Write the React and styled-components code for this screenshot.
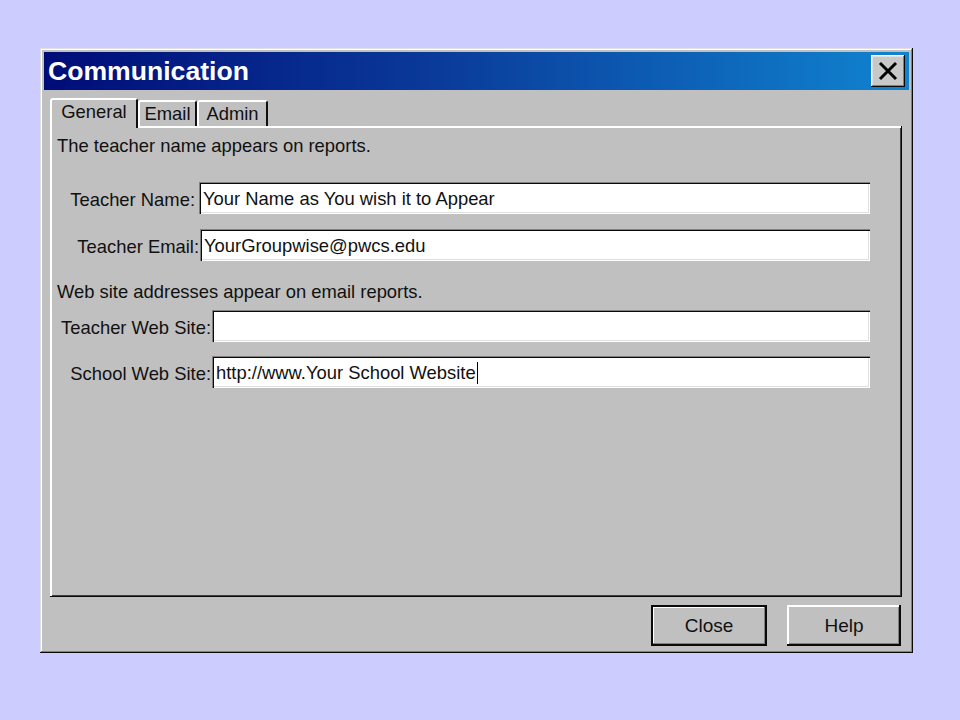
import styled, { createGlobalStyle } from 'styled-components'

const GlobalStyle = createGlobalStyle`
    html, body {
        margin: 0;
        padding: 0;
        background-color: #ccccff;
        font-family: "Liberation Sans", Arial, sans-serif;
    }
`

const Page = styled.div`
    width: 960px;
    height: 720px;
    padding: 48px 0 0 40px;
    box-sizing: border-box;
`

const Window = styled.div`
    width: 873px;
    height: 605px;
    box-sizing: border-box;
    padding: 4px;
    background-color: #c0c0c0;
    display: flex;
    flex-direction: column;
    box-shadow: inset -1px -1px #0a0a0a, inset 1px 1px #dfdfdf,
        inset -2px -2px #808080, inset 2px 2px #ffffff;
`

const TitleBar = styled.div`
    height: 38px;
    display: flex;
    align-items: center;
    justify-content: space-between;
    padding: 0 4px 0 4px;
    background: linear-gradient(90deg, #000c78 0%, #0a3a9a 45%, #1084d0 100%);
`

const Title = styled.span`
    color: white;
    font-weight: bold;
    font-size: 26.6px;
`

const XButton = styled.div`
    width: 34px;
    height: 32px;
    box-sizing: border-box;
    background-color: #c8c8c8;
    display: flex;
    align-items: center;
    justify-content: center;
    box-shadow: inset -1px -1px #0a0a0a, inset 1px 1px #ffffff,
        inset -2px -2px #808080, inset 2px 2px #dfdfdf;
`

const TabBar = styled.div`
    display: flex;
    align-items: flex-end;
    margin: 8px 0 0 6px;
    height: 28px;
    position: relative;
    z-index: 1;
`

const Tab = styled.div`
    width: ${p => p.width}px;
    height: ${p => (p.active ? 30 : 26)}px;
    margin-bottom: ${p => (p.active ? -2 : 0)}px;
    box-sizing: border-box;
    background-color: #c0c0c0;
    font-size: 18.4px;
    color: #111;
    display: flex;
    align-items: center;
    justify-content: center;
    padding-bottom: ${p => (p.active ? 4 : 0)}px;
    border-top: 2px solid #ffffff;
    border-left: 2px solid #ffffff;
    border-right: 2px solid #101010;
    border-top-left-radius: 3px;
    border-top-right-radius: 3px;
`

const Panel = styled.div`
    width: 852px;
    height: 471px;
    margin-left: 6px;
    box-sizing: border-box;
    padding: 8px 32px 0 7px;
    background-color: #c0c0c0;
    box-shadow: inset -1px -1px #0a0a0a, inset 2px 2px #ffffff,
        inset -2px -2px #404040;
    font-size: 18.4px;
    color: #111;
`

const Note = styled.div`
    height: 24px;
    line-height: 24px;
    margin-top: ${p => p.top || 0}px;
`

const Row = styled.div`
    display: flex;
    align-items: center;
    height: 32px;
    margin-top: ${p => p.top}px;
`

const Label = styled.div`
    width: ${p => p.width}px;
    text-align: right;
    white-space: nowrap;
    padding-top: 3px;
`

const Field = styled.div`
    flex: 1;
    height: 32px;
    box-sizing: border-box;
    margin-left: ${p => p.gap}px;
    background-color: white;
    display: flex;
    align-items: center;
    padding: 2px 0 0 4px;
    white-space: nowrap;
    box-shadow: inset 1px 1px #808080, inset 2px 2px #0a0a0a,
        inset -1px -1px #ffffff, inset -2px -2px #dfdfdf;
`

const Caret = styled.span`
    display: inline-block;
    width: 1px;
    height: 22px;
    background-color: black;
    margin-left: 1px;
`

const ButtonRow = styled.div`
    display: flex;
    justify-content: flex-end;
    gap: 20px;
    margin-top: 8px;
    padding-right: 8px;
`

const Button = styled.div`
    width: ${p => p.width}px;
    height: 41px;
    box-sizing: border-box;
    display: flex;
    align-items: center;
    justify-content: center;
    font-size: 19px;
    color: #111;
    background-color: #c0c0c0;
    box-shadow: ${p =>
        p.primary
            ? 'inset 0 0 0 2px #0a0a0a, inset -3px -3px #808080, inset 3px 3px #ffffff'
            : 'inset -2px -2px #0a0a0a, inset 2px 2px #ffffff, inset -3px -3px #808080'};
`

const rows = [
    { label: 'Teacher Name:', labelWidth: 138, gap: 4, top: 24, value: 'Your Name as You wish it to Appear' },
    { label: 'Teacher Email:', labelWidth: 142, gap: 1, top: 15, value: 'YourGroupwise@pwcs.edu' },
]

const webRows = [
    { label: 'Teacher Web Site:', labelWidth: 154, gap: 1, top: 6, value: '' },
    { label: 'School Web Site:', labelWidth: 154, gap: 1, top: 14, value: 'http://www.Your School Website', caret: true },
]

function App() {
    return (
        <Page>
            <GlobalStyle />
            <Window>
                <TitleBar>
                    <Title>Communication</Title>
                    <XButton>
                        <svg width="20" height="20" viewBox="0 0 20 20">
                            <path d="M2 2 L18 18 M18 2 L2 18" stroke="#000" strokeWidth="3" />
                        </svg>
                    </XButton>
                </TitleBar>
                <TabBar>
                    <Tab width={88} active>General</Tab>
                    <Tab width={59}>Email</Tab>
                    <Tab width={71}>Admin</Tab>
                </TabBar>
                <Panel>
                    <Note>The teacher name appears on reports.</Note>
                    {rows.map((r, i) => (
                        <Row key={i} top={r.top}>
                            <Label width={r.labelWidth}>{r.label}</Label>
                            <Field gap={r.gap}>{r.value}</Field>
                        </Row>
                    ))}
                    <Note top={19}>Web site addresses appear on email reports.</Note>
                    {webRows.map((r, i) => (
                        <Row key={i} top={r.top}>
                            <Label width={r.labelWidth}>{r.label}</Label>
                            <Field gap={r.gap}>
                                {r.value}
                                {r.caret && <Caret />}
                            </Field>
                        </Row>
                    ))}
                </Panel>
                <ButtonRow>
                    <Button width={116} primary>Close</Button>
                    <Button width={114}>Help</Button>
                </ButtonRow>
            </Window>
        </Page>
    )
}

export default App
